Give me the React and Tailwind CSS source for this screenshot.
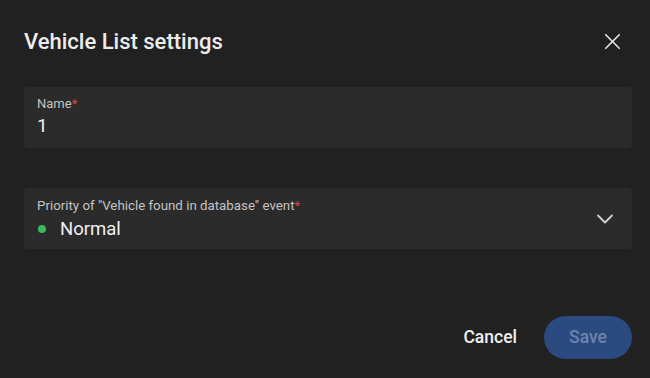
import { X, ChevronDown } from "lucide-react";

export default function App() {
  return (
    <div
      className="w-[650px] h-[378px] bg-[#212121] text-[#ececec] flex flex-col pl-6 pr-[18px] pt-[26px]"
      style={{ fontFamily: "Roboto, 'Liberation Sans', sans-serif" }}
    >
      <div className="flex items-center justify-between h-[30px]">
        <h1 className="text-[22px] font-medium tracking-[0px]">Vehicle List settings</h1>
        <button className="w-[30px] h-[30px] flex items-center justify-center mr-[5px] text-[#e0e0e0]">
          <X size={27} strokeWidth={1.5} />
        </button>
      </div>

      <div className="mt-[31px] h-[61px] bg-[#2b2b2b] rounded-[4px] px-[13px] pt-[8px]">
        <div className="text-[13px] leading-[18px] text-[#c4c4c4]">
          Name<span className="text-[#d14b4b]">*</span>
        </div>
        <div className="text-[19px] leading-[26px] text-[#f0f0f0]">1</div>
      </div>

      <div className="mt-[40px] h-[61px] bg-[#2b2b2b] rounded-[4px] pl-[13px] pr-[13px] flex items-center justify-between">
        <div className="pt-[1px]">
          <div className="text-[13.3px] leading-[18px] text-[#c4c4c4]">
            Priority of "Vehicle found in database" event<span className="text-[#d14b4b]">*</span>
          </div>
          <div className="flex items-center mt-[2px]">
            <span className="w-[8px] h-[8px] rounded-full bg-[#3cb95a] ml-[1px]" />
            <span className="ml-[14px] text-[18.5px] leading-[24px] font-normal text-[#f0f0f0]">Normal</span>
          </div>
        </div>
        <ChevronDown size={28} strokeWidth={1.6} className="text-[#cfcfcf]" />
      </div>

      <div className="mt-[67px] flex items-center justify-end gap-[27px]">
        <button className="text-[17.5px] font-medium text-[#f0f0f0]">Cancel</button>
        <button className="w-[88px] h-[43px] rounded-full bg-[#2b4a80] text-[17.5px] font-medium text-[#6c84ae]">
          Save
        </button>
      </div>
    </div>
  );
}
